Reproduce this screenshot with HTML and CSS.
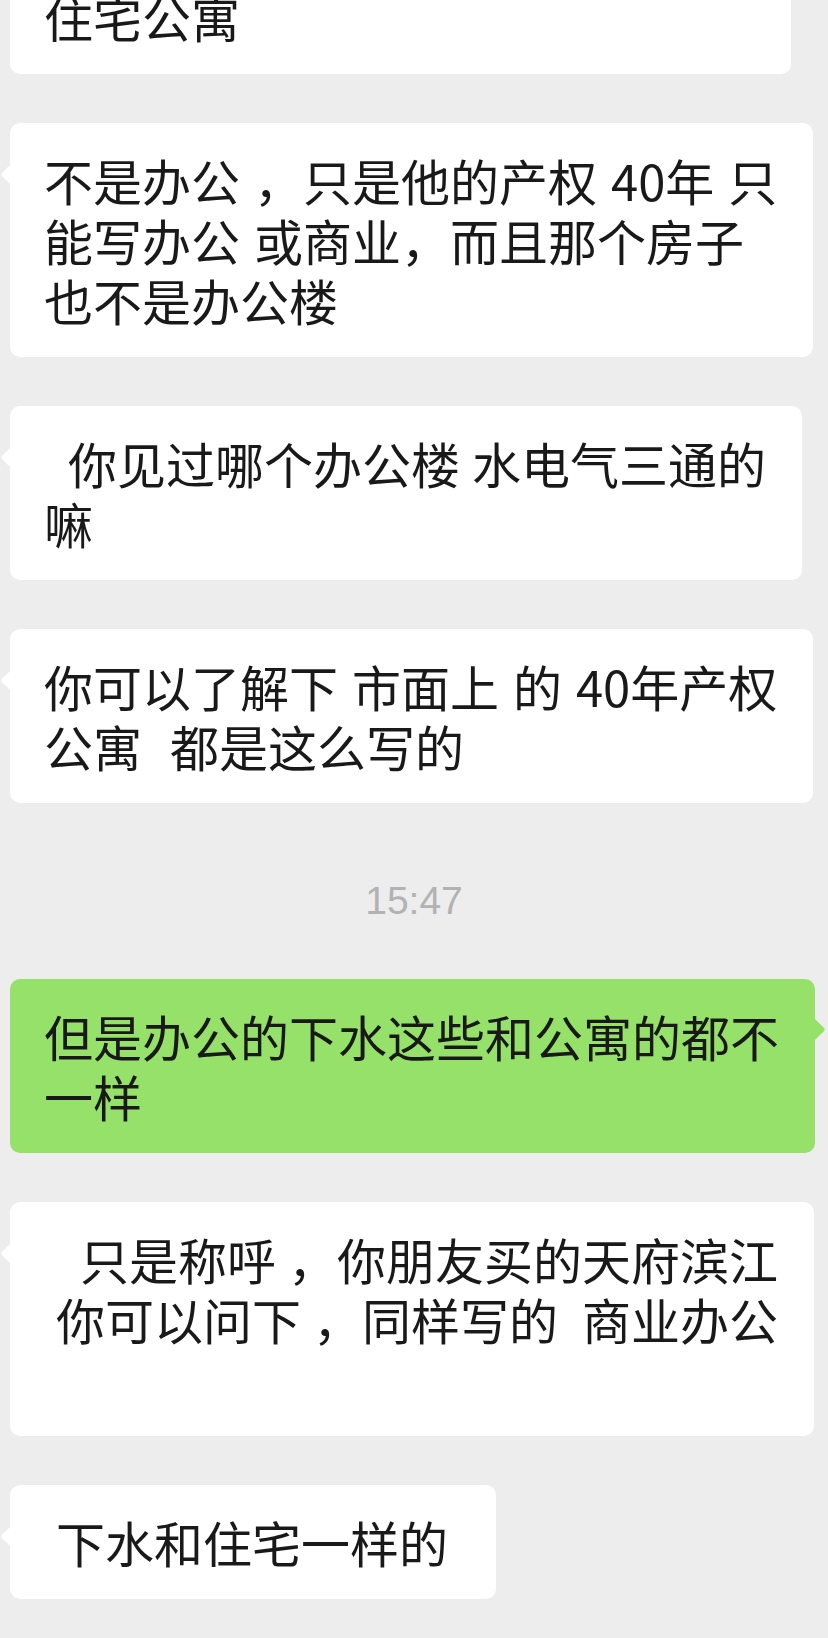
FILE: index.html
```html
<!DOCTYPE html>
<html>
<head>
    <meta charset="utf-8">
    <title>聊天记录</title>
    <link rel="stylesheet" href="styles.css">
</head>
<body>
    <div class="chat">
        <div class="bubble bubble-cut">住宅公寓</div>

        <div class="bubble">不是办公 ，只是他的产权 40年 只<br>能写办公 或商业，而且那个房子<br>也不是办公楼</div>

        <div class="bubble bubble-tight">&nbsp;&nbsp;你见过哪个办公楼 水电气三通的<br>嘛</div>

        <div class="bubble">你可以了解下 市面上 的 40年产权<br>公寓&nbsp; 都是这么写的</div>

        <div class="time">15:47</div>

        <div class="bubble bubble-mine">但是办公的下水这些和公寓的都不<br>一样</div>

        <div class="bubble bubble-indent bubble-tight">&nbsp;&nbsp;只是称呼 ，你朋友买的天府滨江<br>你可以问下 ，同样写的&nbsp; 商业办公<br>&nbsp;</div>

        <div class="bubble bubble-indent bubble-short">下水和住宅一样的</div>
    </div>
</body>
</html>
```

FILE: styles.css
```css
body {
    margin: 0;
    padding: 0;
    background-color: #ededed;
    font-family: "Noto Sans CJK SC", "Noto Sans", sans-serif;
    overflow: hidden;
}
.chat {
    display: flex;
    flex-direction: column;
    align-items: flex-start;
    gap: 49px;
    padding: 0 0 0 10px;
}
.bubble {
    position: relative;
    box-sizing: border-box;
    max-width: 812px;
    padding: 27px 36px 27px 34px;
    background: #ffffff;
    border-radius: 10px;
    color: #191919;
    font-size: 49px;
    line-height: 60px;
    word-spacing: 3px;
    white-space: nowrap;
}
.bubble::before {
    content: "";
    position: absolute;
    top: 43px;
    left: -6px;
    width: 17px;
    height: 17px;
    background: inherit;
    border-radius: 2px;
    transform: rotate(45deg);
}
.bubble-cut {
    width: 781px;
    margin-top: -40px;
}
.bubble-cut::before {
    display: none;
}
.bubble-tight {
    word-spacing: 1px;
}
.bubble-mine {
    align-self: flex-end;
    margin-right: 13px;
    background: #95e16a;
}
.bubble-mine::before {
    left: auto;
    right: -7px;
    top: 42px;
}
.bubble-indent {
    padding-left: 46px;
}
.bubble-short {
    padding-right: 48px;
}
.time {
    align-self: center;
    margin-right: 10px;
    padding: 21px 0 2px;
    line-height: 55px;
    font-family: "Liberation Sans", Arial, sans-serif;
    font-size: 39px;
    color: #b2b2b2;
}
```
